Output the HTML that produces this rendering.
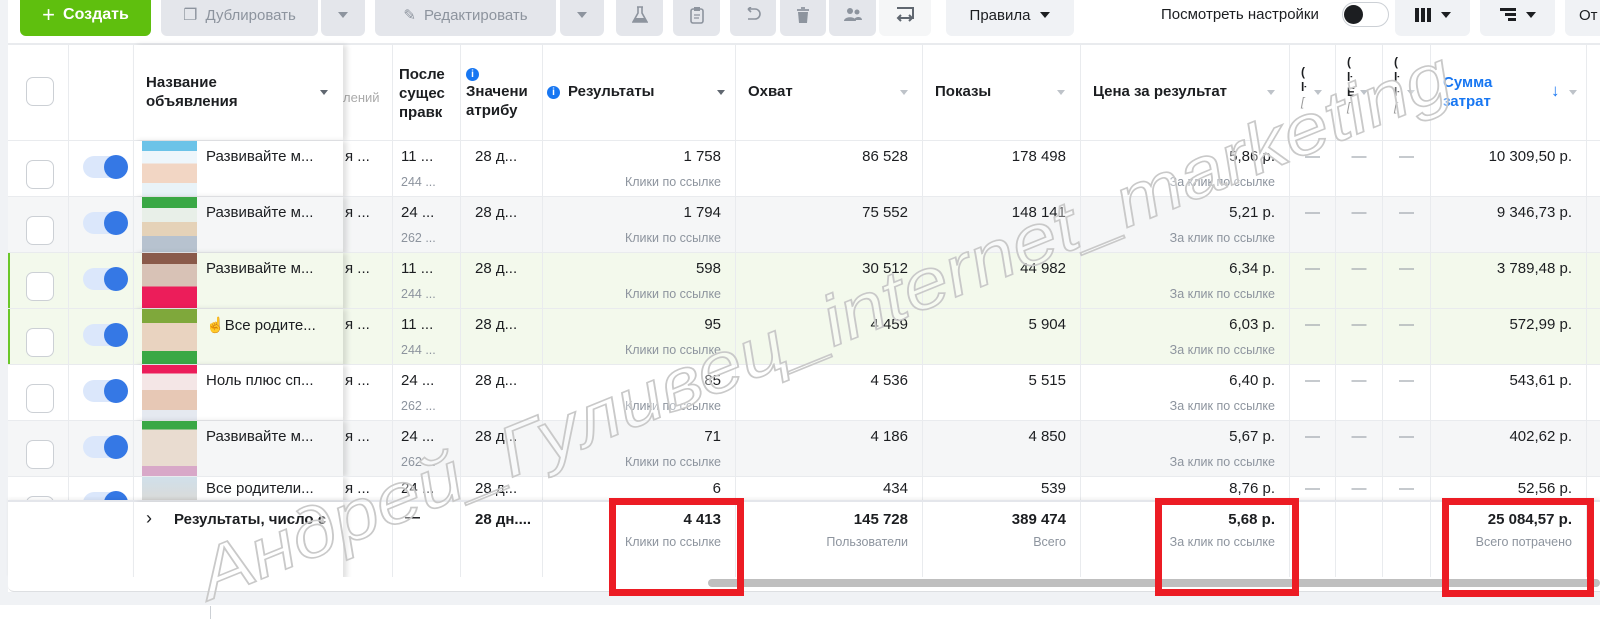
<!DOCTYPE html>
<html><head><meta charset="utf-8">
<style>
*{box-sizing:border-box;margin:0;padding:0}
body{width:1600px;height:619px;overflow:hidden;background:#fff;font-family:"Liberation Sans",Arial,sans-serif;color:#1c1e21;position:relative}
.a{position:absolute}
.btn{position:absolute;top:-6px;height:42px;background:#e4e6eb;border-radius:6px;color:#8d949e;font-size:15px;display:flex;align-items:center;justify-content:center}
.hd{position:absolute;top:45px;height:95px;border-left:1px solid #e9ebee;font-size:15px;font-weight:bold;line-height:19px}
.tri{position:absolute;width:0;height:0;border-left:4px solid transparent;border-right:4px solid transparent;border-top:5px solid #bec3c9}
.row{position:absolute;left:8px;width:1592px;height:56px;border-top:1px solid #e9ebee}
.g{box-shadow:inset 2px 0 0 #6bc72a}
.c{position:absolute;top:0;height:56px;border-left:1px solid #e9ebee;font-size:15px}
.m{position:absolute;top:7px;right:14px;white-space:nowrap}
.s{position:absolute;top:34px;right:14px;font-size:12.5px;color:#8d949e;white-space:nowrap}
.d{position:absolute;top:7px;left:0;right:0;text-align:center;color:#8d949e}
.cb{position:absolute;left:18px;top:19px;width:28px;height:29px;border:1px solid #ccd0d5;border-radius:7px;background:#fff}
.tg{position:absolute;left:75px;top:15px;width:43px;height:22px;border-radius:11px;background:#dbe7fb}
.tg:after{content:"";position:absolute;right:-2px;top:-1px;width:24px;height:24px;border-radius:50%;background:#3578e5}
.th{position:absolute;left:134px;top:0;width:55px;height:56px}
.nm{position:absolute;left:198px;top:7px;font-size:15px;white-space:nowrap}
.rb{position:absolute;border:7px solid #ec1c24}
</style></head><body>
<div class="a" style="left:0;top:0;width:8px;height:605px;background:#f0f2f5"></div>
<div class="a" style="left:0;top:592px;width:1600px;height:13px;background:#f0f2f5"></div>
<div class="a" style="left:210px;top:606px;width:1px;height:13px;background:#ccd0d5"></div>

<div class="btn" style="left:20px;width:131px;background:#5fbf0e;color:#fff;font-weight:bold;font-size:16px"><span style="font-size:22px;font-weight:normal;margin-right:8px">+</span>Создать</div>
<div class="btn" style="left:161px;width:157px"><span style="font-size:16px;margin-right:8px">❐</span>Дублировать</div>
<div class="btn" style="left:321px;width:44px"><div class="tri" style="position:static;border-top-color:#8d949e;border-width:6px 5px 0 5px"></div></div>
<div class="btn" style="left:375px;width:181px"><span style="margin-right:8px">✎</span>Редактировать</div>
<div class="btn" style="left:560px;width:44px"><div class="tri" style="position:static;border-top-color:#8d949e;border-width:6px 5px 0 5px"></div></div>
<div class="btn" style="left:616px;width:47px"><svg width="16" height="18" viewBox="0 0 16 18"><path d="M5 1h6M6 1v6L1 16h14L10 7V1" fill="none" stroke="#8d949e" stroke-width="1.6"/><path d="M3 12h10l2 4H1z" fill="#8d949e"/></svg></div>
<div class="btn" style="left:673px;width:47px"><svg width="14" height="18" viewBox="0 0 14 18"><rect x="1" y="3" width="12" height="14" rx="2" fill="none" stroke="#8d949e" stroke-width="1.6"/><rect x="4" y="1" width="6" height="4" fill="#8d949e"/><path d="M4 9h6M4 12h5" stroke="#8d949e" stroke-width="1.3"/></svg></div>
<div class="btn" style="left:730px;width:46px"><svg width="18" height="16" viewBox="0 0 18 16"><path d="M4 2h7a5 5 0 0 1 0 10H4M4 2l3-2M4 2l3 3" fill="none" stroke="#8d949e" stroke-width="1.6"/></svg></div>
<div class="btn" style="left:780px;width:46px"><svg width="14" height="17" viewBox="0 0 14 17"><path d="M1 3h12M5 1h4" stroke="#8d949e" stroke-width="1.8"/><path d="M2 5h10l-1 11H3z" fill="#8d949e"/></svg></div>
<div class="btn" style="left:829px;width:47px"><svg width="20" height="16" viewBox="0 0 20 16"><circle cx="7" cy="4" r="3" fill="#8d949e"/><circle cx="14" cy="5" r="2.5" fill="#8d949e"/><path d="M1 14c0-5 12-5 12 0zM11 13c1-4 8-4 8 0z" fill="#8d949e"/></svg></div>
<div class="btn" style="left:879px;width:52px;background:#f5f6f7"><svg width="20" height="18" viewBox="0 0 20 18"><path d="M2 2h16v10h-3" fill="none" stroke="#606770" stroke-width="2"/><path d="M6 9l-3 3 3 3M14 9l3 3-3 3M3 12h14" fill="none" stroke="#606770" stroke-width="2"/></svg></div>
<div class="btn" style="left:946px;width:128px;background:#f0f2f5;color:#1c1e21">Правила<div class="tri" style="position:static;margin-left:10px;border-top-color:#1c1e21;border-width:6px 5px 0 5px"></div></div>
<div class="a" style="left:1161px;top:6px;font-size:15px;color:#1c1e21">Посмотреть настройки</div>
<div class="a" style="left:1342px;top:2px;width:47px;height:25px;border:1px solid #ccd0d5;border-radius:13px;background:#fff"></div>
<div class="a" style="left:1344px;top:5px;width:19px;height:19px;border-radius:50%;background:#1c1e21"></div>
<div class="btn" style="left:1395px;width:75px;background:#f0f2f5;color:#1c1e21"><svg width="16" height="14"><rect x="0" y="0" width="4" height="14" fill="#1c1e21"/><rect x="6" y="0" width="4" height="14" fill="#1c1e21"/><rect x="12" y="0" width="4" height="14" fill="#1c1e21"/></svg><div class="tri" style="position:static;margin-left:10px;border-top-color:#1c1e21;border-width:6px 5px 0 5px"></div></div>
<div class="btn" style="left:1480px;width:75px;background:#f0f2f5;color:#1c1e21"><svg width="16" height="14"><rect x="0" y="0" width="16" height="3" fill="#1c1e21"/><rect x="5" y="5" width="11" height="3" fill="#1c1e21"/><rect x="8" y="10" width="8" height="3" fill="#1c1e21"/></svg><div class="tri" style="position:static;margin-left:10px;border-top-color:#1c1e21;border-width:6px 5px 0 5px"></div></div>
<div class="btn" style="left:1565px;width:60px;background:#f0f2f5;color:#1c1e21;justify-content:flex-start;padding-left:14px">От</div>
<div class="a" style="left:8px;top:43px;width:1592px;height:2px;background:#e9ebee"></div>

<div class="hd" style="left:8px;width:60px;border-left:none"><div class="cb" style="top:32px"></div></div>
<div class="hd" style="left:68px;width:65px"></div>
<div class="hd" style="left:392px;width:68px;padding:20px 0 0 6px;overflow:hidden;white-space:nowrap">После<br>сущес<br>правк</div>
<div class="hd" style="left:460px;width:82px;padding:18px 0 0 5px;overflow:hidden;white-space:nowrap"><span style="display:inline-block;width:13px;height:13px;border-radius:50%;background:#1877f2;color:#fff;font-size:10px;text-align:center;line-height:13px">i</span><br>Значени<br>атрибу</div>
<div class="a" style="left:343px;top:90px;font-size:13px;color:#aaa">лений</div>
<div class="hd" style="left:542px;width:193px;padding:37px 0 0 4px"><span style="display:inline-block;width:13px;height:13px;border-radius:50%;background:#1877f2;color:#fff;font-size:10px;text-align:center;line-height:13px;vertical-align:1px;margin-right:8px">i</span>Результаты<div class="tri" style="left:174px;top:45px;border-top-color:#606770"></div></div>
<div class="hd" style="left:735px;width:187px;padding:37px 0 0 12px">Охват<div class="tri" style="left:164px;top:45px"></div></div>
<div class="hd" style="left:922px;width:158px;padding:37px 0 0 12px">Показы<div class="tri" style="left:134px;top:45px"></div></div>
<div class="hd" style="left:1080px;width:209px;padding:37px 0 0 12px">Цена за результат<div class="tri" style="left:186px;top:45px"></div></div>
<div class="hd" style="left:1289px;width:46px;padding:20px 0 0 11px;font-size:12px;line-height:15px">(<br>ŀ<br><i style="color:#999;font-weight:normal">[</i><div class="tri" style="left:24px;top:45px"></div></div>
<div class="hd" style="left:1335px;width:47px;padding:10px 0 0 11px;font-size:12px;line-height:15px">(<br>ŀ<br>E<br><i style="color:#999;font-weight:normal">[</i><div class="tri" style="left:24px;top:45px"></div></div>
<div class="hd" style="left:1382px;width:48px;padding:10px 0 0 11px;font-size:12px;line-height:15px">(<br>ŀ<br>ŀ<br><i style="color:#999;font-weight:normal">[</i><div class="tri" style="left:24px;top:45px"></div></div>
<div class="hd" style="left:1430px;width:156px;padding:28px 0 0 12px;color:#1877f2">Сумма<br>затрат<span class="a" style="left:120px;top:36px;font-weight:normal;font-size:17px">↓</span><div class="tri" style="left:138px;top:45px"></div></div>
<div class="hd" style="left:1586px;width:14px"></div>
<div class="hd" style="left:133px;width:210px;padding:28px 0 0 12px;background:#fff;box-shadow:4px 0 5px rgba(0,0,0,.12)">Название<br>объявления<div class="tri" style="left:186px;top:45px;border-top-color:#606770"></div></div>

<div class="row" style="top:140px;background:#fff">
 <div class="cb"></div><div class="tg"></div>
 <div class="c" style="left:60px;width:65px"></div>
 <div class="c" style="left:384px;width:68px"><span class="a" style="left:8px;top:7px">11 ...</span><span class="a" style="left:8px;top:34px;font-size:12.5px;color:#8d949e">244 ...</span></div>
 <div class="c" style="left:452px;width:82px"><span class="a" style="left:14px;top:7px">28 д...</span></div>
 <div class="c" style="left:534px;width:193px"><span class="m">1 758</span><span class="s">Клики по ссылке</span></div>
 <div class="c" style="left:727px;width:187px"><span class="m">86 528</span></div>
 <div class="c" style="left:914px;width:158px"><span class="m">178 498</span></div>
 <div class="c" style="left:1072px;width:209px"><span class="m">5,86 р.</span><span class="s">За клик по ссылке</span></div>
 <div class="c" style="left:1281px;width:46px"><span class="d">—</span></div>
 <div class="c" style="left:1327px;width:47px"><span class="d">—</span></div>
 <div class="c" style="left:1374px;width:48px"><span class="d">—</span></div>
 <div class="c" style="left:1422px;width:156px"><span class="m">10 309,50 р.</span></div>
 <div class="c" style="left:1578px;width:14px"></div>
 <div class="c" style="left:125px;width:210px;background:inherit;box-shadow:4px 0 5px rgba(0,0,0,.12)"></div>
 <div class="th" style="background:linear-gradient(#6cc3e8 0 18%,#eef6fb 18% 40%,#f2d6c4 40% 75%,#e9f3f8 75%)"></div><span class="nm">Развивайте м...</span>
 <span class="a" style="left:337px;top:7px;font-size:15px">я ...</span>
</div>

<div class="row" style="top:196px;background:#f5f6f7">
 <div class="cb"></div><div class="tg"></div>
 <div class="c" style="left:60px;width:65px"></div>
 <div class="c" style="left:384px;width:68px"><span class="a" style="left:8px;top:7px">24 ...</span><span class="a" style="left:8px;top:34px;font-size:12.5px;color:#8d949e">262 ...</span></div>
 <div class="c" style="left:452px;width:82px"><span class="a" style="left:14px;top:7px">28 д...</span></div>
 <div class="c" style="left:534px;width:193px"><span class="m">1 794</span><span class="s">Клики по ссылке</span></div>
 <div class="c" style="left:727px;width:187px"><span class="m">75 552</span></div>
 <div class="c" style="left:914px;width:158px"><span class="m">148 141</span></div>
 <div class="c" style="left:1072px;width:209px"><span class="m">5,21 р.</span><span class="s">За клик по ссылке</span></div>
 <div class="c" style="left:1281px;width:46px"><span class="d">—</span></div>
 <div class="c" style="left:1327px;width:47px"><span class="d">—</span></div>
 <div class="c" style="left:1374px;width:48px"><span class="d">—</span></div>
 <div class="c" style="left:1422px;width:156px"><span class="m">9 346,73 р.</span></div>
 <div class="c" style="left:1578px;width:14px"></div>
 <div class="c" style="left:125px;width:210px;background:inherit;box-shadow:4px 0 5px rgba(0,0,0,.12)"></div>
 <div class="th" style="background:linear-gradient(#3aa845 0 20%,#e8efe8 20% 45%,#e5d2b8 45% 70%,#b7c2cf 70%)"></div><span class="nm">Развивайте м...</span>
 <span class="a" style="left:337px;top:7px;font-size:15px">я ...</span>
</div>

<div class="row g" style="top:252px;background:#f3f9ec">
 <div class="cb"></div><div class="tg"></div>
 <div class="c" style="left:60px;width:65px"></div>
 <div class="c" style="left:384px;width:68px"><span class="a" style="left:8px;top:7px">11 ...</span><span class="a" style="left:8px;top:34px;font-size:12.5px;color:#8d949e">244 ...</span></div>
 <div class="c" style="left:452px;width:82px"><span class="a" style="left:14px;top:7px">28 д...</span></div>
 <div class="c" style="left:534px;width:193px"><span class="m">598</span><span class="s">Клики по ссылке</span></div>
 <div class="c" style="left:727px;width:187px"><span class="m">30 512</span></div>
 <div class="c" style="left:914px;width:158px"><span class="m">44 982</span></div>
 <div class="c" style="left:1072px;width:209px"><span class="m">6,34 р.</span><span class="s">За клик по ссылке</span></div>
 <div class="c" style="left:1281px;width:46px"><span class="d">—</span></div>
 <div class="c" style="left:1327px;width:47px"><span class="d">—</span></div>
 <div class="c" style="left:1374px;width:48px"><span class="d">—</span></div>
 <div class="c" style="left:1422px;width:156px"><span class="m">3 789,48 р.</span></div>
 <div class="c" style="left:1578px;width:14px"></div>
 <div class="c" style="left:125px;width:210px;background:inherit;box-shadow:4px 0 5px rgba(0,0,0,.12)"></div>
 <div class="th" style="background:linear-gradient(#8a5a4a 0 20%,#d8c2b6 20% 60%,#ec1d5a 60%)"></div><span class="nm">Развивайте м...</span>
 <span class="a" style="left:337px;top:7px;font-size:15px">я ...</span>
</div>

<div class="row g" style="top:308px;background:#f3f9ec">
 <div class="cb"></div><div class="tg"></div>
 <div class="c" style="left:60px;width:65px"></div>
 <div class="c" style="left:384px;width:68px"><span class="a" style="left:8px;top:7px">11 ...</span><span class="a" style="left:8px;top:34px;font-size:12.5px;color:#8d949e">244 ...</span></div>
 <div class="c" style="left:452px;width:82px"><span class="a" style="left:14px;top:7px">28 д...</span></div>
 <div class="c" style="left:534px;width:193px"><span class="m">95</span><span class="s">Клики по ссылке</span></div>
 <div class="c" style="left:727px;width:187px"><span class="m">4 459</span></div>
 <div class="c" style="left:914px;width:158px"><span class="m">5 904</span></div>
 <div class="c" style="left:1072px;width:209px"><span class="m">6,03 р.</span><span class="s">За клик по ссылке</span></div>
 <div class="c" style="left:1281px;width:46px"><span class="d">—</span></div>
 <div class="c" style="left:1327px;width:47px"><span class="d">—</span></div>
 <div class="c" style="left:1374px;width:48px"><span class="d">—</span></div>
 <div class="c" style="left:1422px;width:156px"><span class="m">572,99 р.</span></div>
 <div class="c" style="left:1578px;width:14px"></div>
 <div class="c" style="left:125px;width:210px;background:inherit;box-shadow:4px 0 5px rgba(0,0,0,.12)"></div>
 <div class="th" style="background:linear-gradient(#7fa83b 0 25%,#e9d3c0 25% 75%,#3aa845 75%)"></div><span class="nm"><span style="color:#e0a000">☝</span>Все родите...</span>
 <span class="a" style="left:337px;top:7px;font-size:15px">я ...</span>
</div>

<div class="row" style="top:364px;background:#fff">
 <div class="cb"></div><div class="tg"></div>
 <div class="c" style="left:60px;width:65px"></div>
 <div class="c" style="left:384px;width:68px"><span class="a" style="left:8px;top:7px">24 ...</span><span class="a" style="left:8px;top:34px;font-size:12.5px;color:#8d949e">262 ...</span></div>
 <div class="c" style="left:452px;width:82px"><span class="a" style="left:14px;top:7px">28 д...</span></div>
 <div class="c" style="left:534px;width:193px"><span class="m">85</span><span class="s">Клики по ссылке</span></div>
 <div class="c" style="left:727px;width:187px"><span class="m">4 536</span></div>
 <div class="c" style="left:914px;width:158px"><span class="m">5 515</span></div>
 <div class="c" style="left:1072px;width:209px"><span class="m">6,40 р.</span><span class="s">За клик по ссылке</span></div>
 <div class="c" style="left:1281px;width:46px"><span class="d">—</span></div>
 <div class="c" style="left:1327px;width:47px"><span class="d">—</span></div>
 <div class="c" style="left:1374px;width:48px"><span class="d">—</span></div>
 <div class="c" style="left:1422px;width:156px"><span class="m">543,61 р.</span></div>
 <div class="c" style="left:1578px;width:14px"></div>
 <div class="c" style="left:125px;width:210px;background:inherit;box-shadow:4px 0 5px rgba(0,0,0,.12)"></div>
 <div class="th" style="background:linear-gradient(#ec1d5a 0 15%,#f4e6e6 15% 45%,#e7c8b5 45% 80%,#e5e9f0 80%)"></div><span class="nm">Ноль плюс сп...</span>
 <span class="a" style="left:337px;top:7px;font-size:15px">я ...</span>
</div>

<div class="row" style="top:420px;background:#f5f6f7">
 <div class="cb"></div><div class="tg"></div>
 <div class="c" style="left:60px;width:65px"></div>
 <div class="c" style="left:384px;width:68px"><span class="a" style="left:8px;top:7px">24 ...</span><span class="a" style="left:8px;top:34px;font-size:12.5px;color:#8d949e">262 ...</span></div>
 <div class="c" style="left:452px;width:82px"><span class="a" style="left:14px;top:7px">28 д...</span></div>
 <div class="c" style="left:534px;width:193px"><span class="m">71</span><span class="s">Клики по ссылке</span></div>
 <div class="c" style="left:727px;width:187px"><span class="m">4 186</span></div>
 <div class="c" style="left:914px;width:158px"><span class="m">4 850</span></div>
 <div class="c" style="left:1072px;width:209px"><span class="m">5,67 р.</span><span class="s">За клик по ссылке</span></div>
 <div class="c" style="left:1281px;width:46px"><span class="d">—</span></div>
 <div class="c" style="left:1327px;width:47px"><span class="d">—</span></div>
 <div class="c" style="left:1374px;width:48px"><span class="d">—</span></div>
 <div class="c" style="left:1422px;width:156px"><span class="m">402,62 р.</span></div>
 <div class="c" style="left:1578px;width:14px"></div>
 <div class="c" style="left:125px;width:210px;background:inherit;box-shadow:4px 0 5px rgba(0,0,0,.12)"></div>
 <div class="th" style="background:linear-gradient(#3aa845 0 15%,#e9dcd0 15% 80%,#d8a8c8 80%)"></div><span class="nm">Развивайте м...</span>
 <span class="a" style="left:337px;top:7px;font-size:15px">я ...</span>
</div>

<div class="row" style="top:476px;height:24px;overflow:hidden;background:#fff">
 <div class="cb" style="top:19px"></div><div class="tg"></div>
 <div class="c" style="left:60px;width:65px"></div>
 <div class="c" style="left:384px;width:68px"><span class="a" style="left:8px;top:3px">24 ...</span></div>
 <div class="c" style="left:452px;width:82px"><span class="a" style="left:14px;top:3px">28 д...</span></div>
 <div class="c" style="left:534px;width:193px"><span class="m" style="top:3px">6</span></div>
 <div class="c" style="left:727px;width:187px"><span class="m" style="top:3px">434</span></div>
 <div class="c" style="left:914px;width:158px"><span class="m" style="top:3px">539</span></div>
 <div class="c" style="left:1072px;width:209px"><span class="m" style="top:3px">8,76 р.</span></div>
 <div class="c" style="left:1281px;width:46px"><span class="d" style="top:3px">—</span></div>
 <div class="c" style="left:1327px;width:47px"><span class="d" style="top:3px">—</span></div>
 <div class="c" style="left:1374px;width:48px"><span class="d" style="top:3px">—</span></div>
 <div class="c" style="left:1422px;width:156px"><span class="m" style="top:3px">52,56 р.</span></div>
 <div class="c" style="left:1578px;width:14px"></div>
 <div class="c" style="left:125px;width:210px;background:inherit;box-shadow:4px 0 5px rgba(0,0,0,.12)"></div>
 <div class="th" style="background:linear-gradient(#d0e0ea,#e8d2c0)"></div><span class="nm" style="top:3px">Все родители...</span>
 <span class="a" style="left:337px;top:3px;font-size:15px">я ...</span>
</div>

<div class="row" style="top:500px;height:78px;background:#fff;border-top:2px solid #e4e6eb;box-shadow:0 -2px 3px rgba(0,0,0,.05)">
 <div class="c" style="left:125px;width:210px;height:78px;box-shadow:4px 0 5px rgba(0,0,0,.12)"><span class="a" style="left:12px;top:6px;font-size:18px">›</span><span class="a" style="left:40px;top:9px;font-weight:bold;white-space:nowrap;overflow:hidden;width:165px">Результаты, число с</span></div>
 <div class="c" style="left:384px;width:68px;height:78px"><span class="a" style="left:12px;top:7px;font-weight:bold">—</span></div>
 <div class="c" style="left:452px;width:82px;height:78px"><span class="a" style="left:14px;top:9px;font-weight:bold">28 дн....</span></div>
 <div class="c" style="left:534px;width:193px;height:78px"><span class="m" style="top:9px;font-weight:bold">4 413</span><span class="s" style="top:33px">Клики по ссылке</span></div>
 <div class="c" style="left:727px;width:187px;height:78px"><span class="m" style="top:9px;font-weight:bold">145 728</span><span class="s" style="top:33px">Пользователи</span></div>
 <div class="c" style="left:914px;width:158px;height:78px"><span class="m" style="top:9px;font-weight:bold">389 474</span><span class="s" style="top:33px">Всего</span></div>
 <div class="c" style="left:1072px;width:209px;height:78px"><span class="m" style="top:9px;font-weight:bold">5,68 р.</span><span class="s" style="top:33px">За клик по ссылке</span></div>
 <div class="c" style="left:1281px;width:46px;height:78px"></div>
 <div class="c" style="left:1327px;width:47px;height:78px"></div>
 <div class="c" style="left:1374px;width:48px;height:78px"></div>
 <div class="c" style="left:1422px;width:156px;height:78px"><span class="m" style="top:9px;font-weight:bold">25 084,57 р.</span><span class="s" style="top:33px">Всего потрачено</span></div>
 <div class="c" style="left:1578px;width:14px;height:78px"></div>
</div>
<div class="a" style="left:8px;top:577px;width:1592px;height:15px;background:#fff;border-bottom:1px solid #dddfe2;border-radius:0 0 0 6px"></div>
<div class="a" style="left:708px;top:579px;width:892px;height:8px;background:#bfbfbf;border-radius:4px"></div>

<svg class="a" style="left:0;top:0" width="1600" height="619">
<text x="0" y="0" transform="translate(210,600) rotate(-22.1)" font-family="Liberation Sans, sans-serif" font-size="70" font-style="italic" fill="rgba(255,255,255,0.35)" stroke="#c9c9c9" stroke-width="1.6" textLength="1345" lengthAdjust="spacingAndGlyphs">Андрей_Гуливец_internet_marketing</text>
</svg>

<div class="rb" style="left:609px;top:498px;width:135px;height:98px"></div>
<div class="rb" style="left:1155px;top:498px;width:144px;height:98px"></div>
<div class="rb" style="left:1442px;top:498px;width:152px;height:99px"></div>
</body></html>
